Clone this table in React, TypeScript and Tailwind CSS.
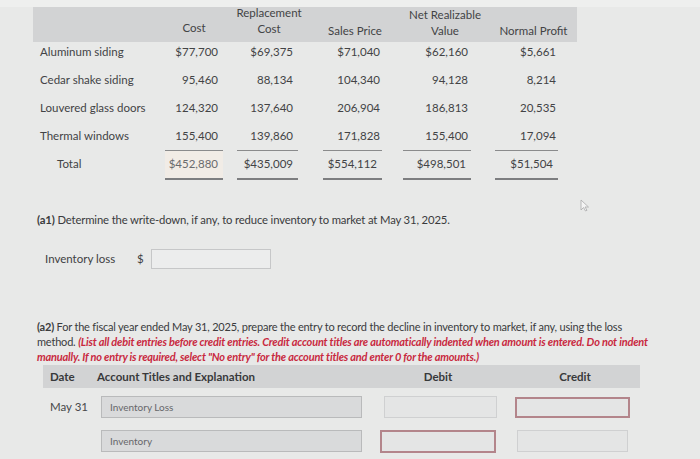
import React from "react";

const rows = [
  ["Aluminum siding", "$77,700", "$69,375", "$71,040", "$62,160", "$5,661"],
  ["Cedar shake siding", "95,460", "88,134", "104,340", "94,128", "8,214"],
  ["Louvered glass doors", "124,320", "137,640", "206,904", "186,813", "20,535"],
  ["Thermal windows", "155,400", "139,860", "171,828", "155,400", "17,094"],
];
const totals = ["$452,880", "$435,009", "$554,112", "$498,501", "$51,504"];

const cols = [
  { w: "w-[68px]", pr: "pr-[10px]", line: "ml-[5px] mr-[5px]" },
  { w: "w-[82px]", pr: "pr-[17px]", line: "ml-[9px] mr-[12px]" },
  { w: "w-[90px]", pr: "pr-[20px]", line: "ml-[13px] mr-[18px]" },
  { w: "w-[90px]", pr: "pr-[22px]", line: "ml-[3px] mr-[19px]" },
  { w: "w-[87px]", pr: "pr-[21px]", line: "ml-[5px] mr-[19px]" },
];

export default function App() {
  return (
    <div
      className="w-[700px] h-[459px] overflow-hidden bg-[#e8e9e8] text-[#424345] relative"
      style={{ fontFamily: "Lato, 'Open Sans', sans-serif" }}
    >
      <div className="h-[7px] bg-[#eeefee]" />
      {/* Top table */}
      <div className="ml-[33px] w-[544px]">
        <div className="h-[35px] bg-[#d2d3d4] flex items-end pb-[3px] text-[11.5px] leading-[16px]">
          <div className="w-[127px]" />
          <div className={`${cols[0].w} text-center mb-[3px]`}>Cost</div>
          <div className={`${cols[1].w} text-center mb-[2px]`}>
            Replacement
            <br />
            Cost
          </div>
          <div className={`${cols[2].w} text-center`}>Sales Price</div>
          <div className={`${cols[3].w} text-center`}>
            Net Realizable
            <br />
            Value
          </div>
          <div className={`${cols[4].w} text-center`}>Normal Profit</div>
        </div>
        {rows.map((r, i) => (
          <div
            key={i}
            className={`flex text-[11.5px] leading-[16px] pt-[2px] ${i === 3 ? "h-[24px]" : "h-[28px]"}`}
          >
            <div className="w-[127px] pl-[7px]">{r[0]}</div>
            {r.slice(1).map((v, j) => (
              <div key={j} className={`${cols[j].w} ${cols[j].pr} text-right`}>
                {v}
              </div>
            ))}
          </div>
        ))}
        <div className="flex text-[11.5px] leading-[16px]">
          <div className="w-[127px] pl-[24px] pt-[6px]">Total</div>
          {totals.map((v, j) => (
            <div key={j} className={`${cols[j].w}`}>
              <div
                className={`${cols[j].line} border-t border-[#8a8b8c] h-[28px] pt-[5px] text-right ${
                  j === 0 ? "bg-[#f1ece6] text-[#6a6b6d]" : ""
                }`}
              >
                <span className="block pr-[5px]">{v}</span>
              </div>
              <div className={`${cols[j].line} h-[2px] bg-[#7d7e80]`} />
            </div>
          ))}
        </div>
      </div>

      {/* a1 */}
      <div className="mt-[32px] ml-[37px] text-[11.3px] leading-[16px] tracking-[-0.15px] text-[#3a3b3d]">
        <span className="font-bold">(a1)</span> Determine the write-down, if any, to reduce inventory to
        market at May 31, 2025.
      </div>
      <div className="mt-[21px] ml-[45px] flex items-center text-[11.5px] leading-[16px] text-[#404143]">
        <span className="w-[92px]">Inventory loss</span>
        <span className="w-[14px]">$</span>
        <div className="w-[120px] h-[20px] bg-[#eceded] border border-[#c6c7c8]" />
      </div>

      {/* a2 */}
      <div className="mt-[50px] ml-[37px] text-[11px] leading-[15px] tracking-[-0.2px] text-[#3a3b3d]">
        <div className="whitespace-nowrap">
          <span className="font-bold">(a2)</span> For the fiscal year ended May 31, 2025, prepare the entry to
          record the decline in inventory to market, if any, using the loss
        </div>
        <div className="whitespace-nowrap">
          method.{" "}
          <span className="italic font-bold text-[#c9293f]">
            (List all debit entries before credit entries. Credit account titles are automatically indented
            when amount is entered. Do not indent
          </span>
        </div>
        <div className="whitespace-nowrap italic font-bold text-[#c9293f]">
          manually. If no entry is required, select "No entry" for the account titles and enter 0 for the
          amounts.)
        </div>
      </div>

      {/* Journal */}
      <div className="mt-[1px] ml-[43px] w-[597px] h-[23px] bg-[#d2d3d4] flex items-center text-[11.5px] font-bold text-[#38393b]">
        <div className="w-[54px] pl-[7px]">Date</div>
        <div className="w-[283px]">Account Titles and Explanation</div>
        <div className="w-[116px] text-center">Debit</div>
        <div className="w-[144px] text-center pl-[14px]">Credit</div>
      </div>
      <div className="mt-[8px] ml-[43px] flex items-center h-[22px]">
        <div className="w-[58px] pl-[7px] text-[11.5px] text-[#47484a]">May 31</div>
        <div className="w-[261px] h-[22px] bg-[#d9dadb] border border-[#b9babb] flex items-center pl-[8px] text-[10px] text-[#66676a]">
          Inventory Loss
        </div>
        <div className="ml-[22px] w-[113px] h-[22px] bg-[#e4e5e5] border border-[#cfd0d1]" />
        <div className="ml-[18px] w-[115px] h-[21px] bg-[#e4e5e5] border-2 border-[#b3858b]" />
      </div>
      <div className="mt-[12px] ml-[43px] flex items-center h-[22px]">
        <div className="w-[58px]" />
        <div className="w-[261px] h-[22px] bg-[#d9dadb] border border-[#b9babb] flex items-center pl-[8px] text-[10px] text-[#66676a]">
          Inventory
        </div>
        <div className="ml-[18px] w-[116px] h-[23px] bg-[#e4e5e5] border-2 border-[#b3858b]" />
        <div className="ml-[21px] w-[111px] h-[22px] bg-[#e4e5e5] border border-[#cfd0d1]" />
      </div>

      {/* cursor */}
      <svg className="absolute left-[580px] top-[199px]" width="10" height="13" viewBox="0 0 10 13">
        <path d="M1 1 L1 11 L3.5 8.5 L5.5 12 L7 11.3 L5 8 L8.5 8 Z" fill="#f4f4f4" stroke="#a9aaab" strokeWidth="0.8" />
      </svg>
    </div>
  );
}
